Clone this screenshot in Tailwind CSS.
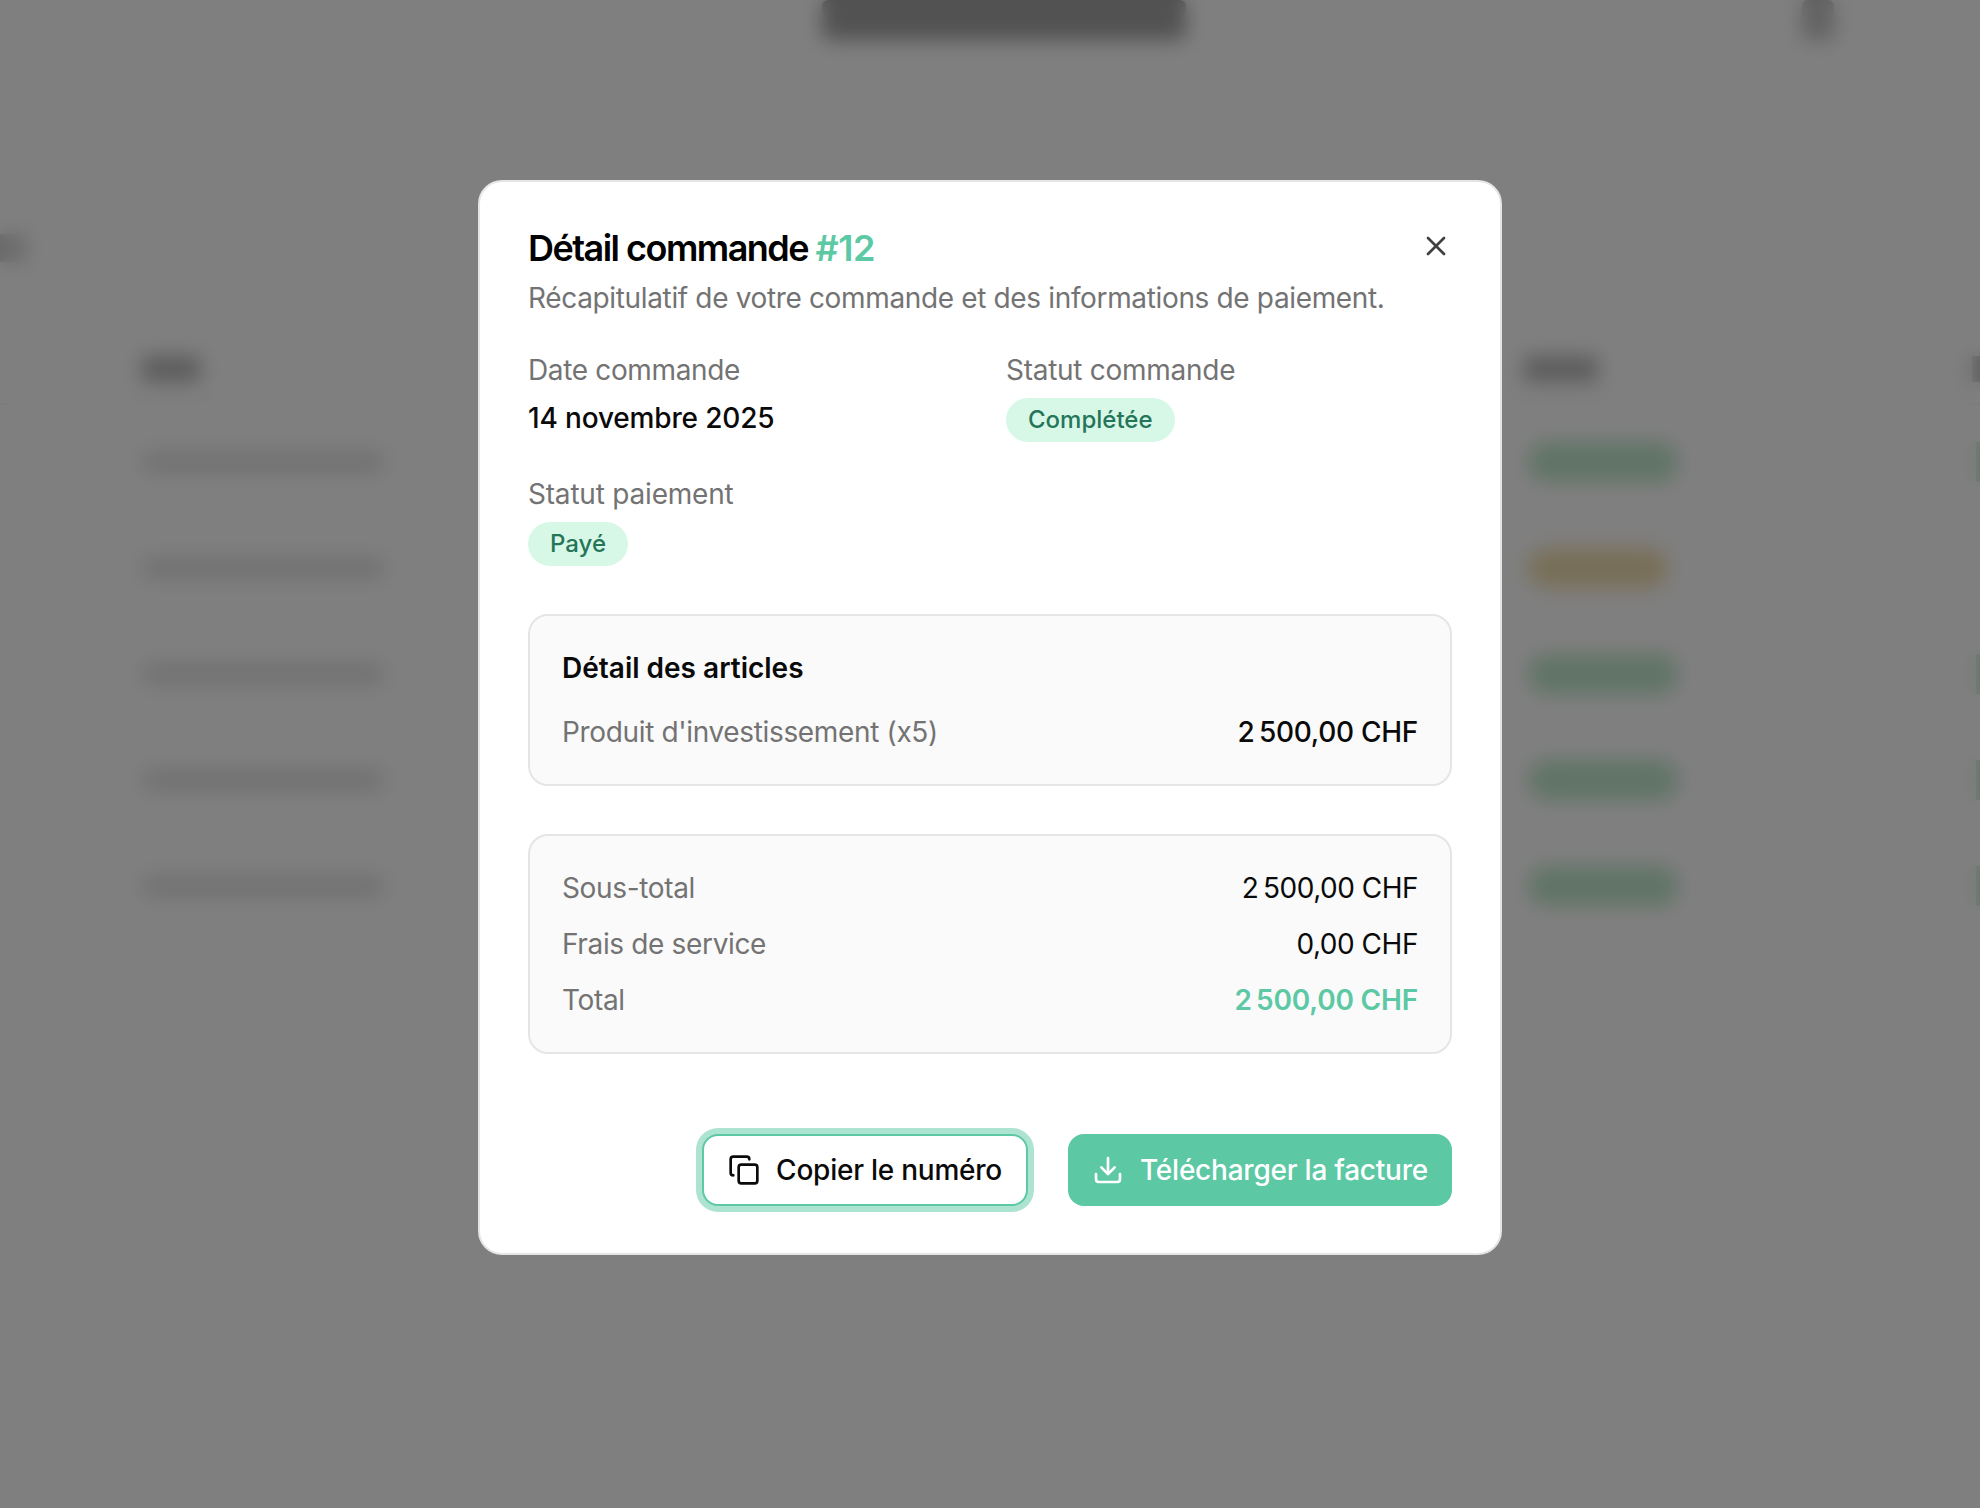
<!DOCTYPE html>
<html lang="fr">
  <head>
    <meta charset="UTF-8" />
    <meta name="viewport" content="width=device-width, initial-scale=1.0" />
    <title>Détail commande</title>
    <script src="https://cdn.jsdelivr.net/npm/@tailwindcss/browser@4"></script>
  </head>
  <body class="bg-white font-['Inter',sans-serif] text-[28px] leading-[40px] tracking-[-0.35px] text-[#0a0a0a]">
    <!-- page behind the dialog, only seen through the blur -->
    <div class="h-screen overflow-hidden bg-white">
      <div class="flex h-[44px]">
        <div class="ml-[822px] h-[40px] w-[364px] shrink-0 rounded-md bg-[#a4a4a4]"></div>
        <div class="ml-[616px] h-[40px] w-[32px] shrink-0 rounded-md bg-[#c4c4c4]"></div>
      </div>
      <div class="mt-[190px] h-[28px] w-[26px] rounded-r-md bg-[#d4d4d4]"></div>
      <div class="mt-[94px] flex h-[49px] items-start border-b-2 border-[#f0f0f0]">
        <div class="ml-[142px] h-[26px] w-[58px] shrink-0 bg-[#b8b8b8]"></div>
        <div class="ml-[1324px] h-[26px] w-[74px] shrink-0 bg-[#b8b8b8]"></div>
        <div class="ml-[374px] h-[26px] w-[40px] shrink-0 bg-[#b8b8b8]"></div>
      </div>
      <div class="flex flex-col">
        <div class="flex h-[106px] items-center pt-[8px]">
          <div class="ml-[144px] h-[20px] w-[238px] shrink-0 bg-[#e0e0e0]"></div>
          <div class="ml-[1146px] h-[40px] w-[150px] shrink-0 rounded-full bg-[#c0e8cc]"></div>
          <div class="ml-[298px] h-[40px] w-[40px] shrink-0 bg-[#c0e8cc]"></div>
        </div>
        <div class="flex h-[106px] items-center pt-[8px]">
          <div class="ml-[144px] h-[20px] w-[238px] shrink-0 bg-[#e0e0e0]"></div>
          <div class="ml-[1146px] h-[40px] w-[140px] shrink-0 rounded-full bg-[#f2deb0]"></div>
        </div>
        <div class="flex h-[106px] items-center pt-[8px]">
          <div class="ml-[144px] h-[20px] w-[238px] shrink-0 bg-[#e0e0e0]"></div>
          <div class="ml-[1146px] h-[40px] w-[150px] shrink-0 rounded-full bg-[#c0e8cc]"></div>
          <div class="ml-[298px] h-[40px] w-[40px] shrink-0 bg-[#c0e8cc]"></div>
        </div>
        <div class="flex h-[106px] items-center pt-[8px]">
          <div class="ml-[144px] h-[20px] w-[238px] shrink-0 bg-[#e0e0e0]"></div>
          <div class="ml-[1146px] h-[40px] w-[150px] shrink-0 rounded-full bg-[#c0e8cc]"></div>
          <div class="ml-[298px] h-[40px] w-[40px] shrink-0 bg-[#c0e8cc]"></div>
        </div>
        <div class="flex h-[106px] items-center pt-[8px]">
          <div class="ml-[144px] h-[20px] w-[238px] shrink-0 bg-[#e0e0e0]"></div>
          <div class="ml-[1146px] h-[40px] w-[150px] shrink-0 rounded-full bg-[#c0e8cc]"></div>
          <div class="ml-[298px] h-[40px] w-[40px] shrink-0 bg-[#c0e8cc]"></div>
        </div>
      </div>
    </div>

    <!-- overlay + dialog -->
    <div class="fixed inset-0 flex justify-center bg-black/50 pt-[180px] backdrop-blur-[10px]">
      <div class="relative flex h-[1075px] w-[1024px] flex-col rounded-[24px] border-2 border-[#e5e5e5] bg-white p-[48px]">
        <button class="absolute right-[48px] top-[48px] text-[#404040]">
          <svg class="h-[32px] w-[32px]" viewBox="0 0 24 24" fill="none" stroke="currentColor" stroke-width="2" stroke-linecap="round" stroke-linejoin="round">
            <path d="M18 6 6 18" />
            <path d="m6 6 12 12" />
          </svg>
        </button>

        <h2 class="-mt-[2px] mb-[2px] text-[36px] font-semibold tracking-[-1.53px] text-black">
          Détail commande <span class="tracking-[-0.5px] text-[#5cc8a4]">#12</span>
        </h2>
        <p class="mt-[8px] text-[#737373]">Récapitulatif de votre commande et des informations de paiement.</p>

        <div class="mt-[32px] grid grid-cols-2 gap-x-[32px] gap-y-[32px]">
          <div>
            <p class="text-[#737373]">Date commande</p>
            <p class="mt-[8px] font-medium tracking-[-0.16px]">14 novembre 2025</p>
          </div>
          <div>
            <p class="tracking-[-0.27px] text-[#737373]">Statut commande</p>
            <span class="mt-[8px] inline-flex h-[44px] items-center rounded-full bg-[#d8f8e7] px-[22px] text-[24px] font-medium tracking-[0px] text-[#24755a]">Complétée</span>
          </div>
          <div>
            <p class="tracking-[-0.2px] text-[#737373]">Statut paiement</p>
            <span class="mt-[8px] inline-flex h-[44px] items-center rounded-full bg-[#d8f8e7] px-[22px] text-[24px] font-medium tracking-[0px] text-[#24755a]">Payé</span>
          </div>
        </div>

        <div class="mt-[48px] rounded-[20px] border-2 border-[#e5e5e5] bg-[#fafafa] p-[32px]">
          <h3 class="font-semibold tracking-[0px]">Détail des articles</h3>
          <div class="mt-[24px] flex justify-between">
            <span class="text-[#737373]">Produit d'investissement (x5)</span>
            <span class="font-medium tracking-[-0.3px]">2&#8239;500,00 CHF</span>
          </div>
        </div>

        <div class="mt-[48px] flex flex-col gap-[16px] rounded-[20px] border-2 border-[#e5e5e5] bg-[#fafafa] p-[32px]">
          <div class="flex justify-between">
            <span class="text-[#737373]">Sous-total</span>
            <span class="tracking-[-0.5px]">2&#8239;500,00 CHF</span>
          </div>
          <div class="flex justify-between">
            <span class="text-[#737373]">Frais de service</span>
            <span class="tracking-[-0.47px]">0,00 CHF</span>
          </div>
          <div class="flex justify-between">
            <span class="text-[#737373]">Total</span>
            <span class="font-semibold tracking-[-0.2px] text-[#5cc8a4]">2&#8239;500,00 CHF</span>
          </div>
        </div>

        <div class="mt-[80px] flex justify-end gap-[40px]">
          <button class="flex h-[72px] items-center gap-[16px] rounded-[16px] border-2 border-[#5cc8a4] bg-white px-[24px] font-medium tracking-[-0.24px] ring-[6px] ring-[#5cc8a4]/50">
            <svg class="h-[32px] w-[32px]" viewBox="0 0 24 24" fill="none" stroke="currentColor" stroke-width="2" stroke-linecap="round" stroke-linejoin="round">
              <rect width="14" height="14" x="8" y="8" rx="2" ry="2" />
              <path d="M4 16c-1.1 0-2-.9-2-2V4c0-1.1.9-2 2-2h10c1.1 0 2 .9 2 2" />
            </svg>
            Copier le numéro
          </button>
          <button class="flex h-[72px] items-center gap-[16px] rounded-[16px] bg-[#5cc8a4] px-[24px] font-medium tracking-[-0.23px] text-white">
            <svg class="h-[32px] w-[32px]" viewBox="0 0 24 24" fill="none" stroke="currentColor" stroke-width="2" stroke-linecap="round" stroke-linejoin="round">
              <path d="M21 15v4a2 2 0 0 1-2 2H5a2 2 0 0 1-2-2v-4" />
              <polyline points="7 10 12 15 17 10" />
              <line x1="12" x2="12" y1="15" y2="3" />
            </svg>
            Télécharger la facture
          </button>
        </div>
      </div>
    </div>
  </body>
</html>
